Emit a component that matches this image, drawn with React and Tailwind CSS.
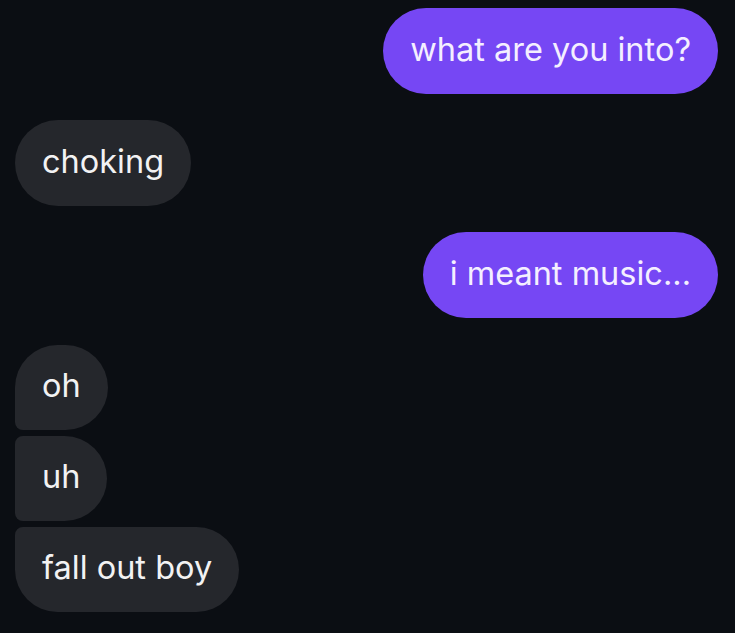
import React from "react";

const messages = [
  { id: 1, from: "me", text: "what are you into?" },
  { id: 2, from: "them", text: "choking" },
  { id: 3, from: "me", text: "i meant music..." },
  {
    id: 4,
    from: "them",
    group: [
      { text: "oh", shape: "rounded-tl-[43px] rounded-tr-[43px] rounded-br-[43px] rounded-bl-[8px]" },
      { text: "uh", shape: "rounded-tl-[8px] rounded-bl-[8px] rounded-tr-[43px] rounded-br-[43px]" },
      { text: "fall out boy", shape: "rounded-tl-[8px] rounded-tr-[43px] rounded-br-[43px] rounded-bl-[43px]" },
    ],
  },
];

const Bubble = ({ text, mine, shape = "rounded-[43px]", h = "h-[86px]" }) => (
  <div
    className={`${h} flex items-center px-[27px] pb-[2px] text-[32.5px] leading-none font-normal ${shape} ${
      mine ? "bg-[#7647f4] text-[#f4efff]" : "bg-[#25272c] text-[#f2f2f3]"
    }`}
  >
    {text}
  </div>
);

export default function App() {
  return (
    <div
      className="w-[735px] h-[633px] overflow-hidden bg-[#0b0e13] pt-2 pr-[17px] pl-[15px] flex flex-col gap-[26px]"
      style={{ fontFamily: "Inter, 'Noto Sans', sans-serif" }}
    >
      {messages.map((m) =>
        m.group ? (
          <div key={m.id} className="flex flex-col items-start gap-[6px] pt-[1px]">
            {m.group.map((g, i) => (
              <Bubble key={i} text={g.text} shape={g.shape} h="h-[85px]" />
            ))}
          </div>
        ) : (
          <div key={m.id} className={`flex ${m.from === "me" ? "justify-end" : "justify-start"}`}>
            <Bubble text={m.text} mine={m.from === "me"} />
          </div>
        )
      )}
    </div>
  );
}
